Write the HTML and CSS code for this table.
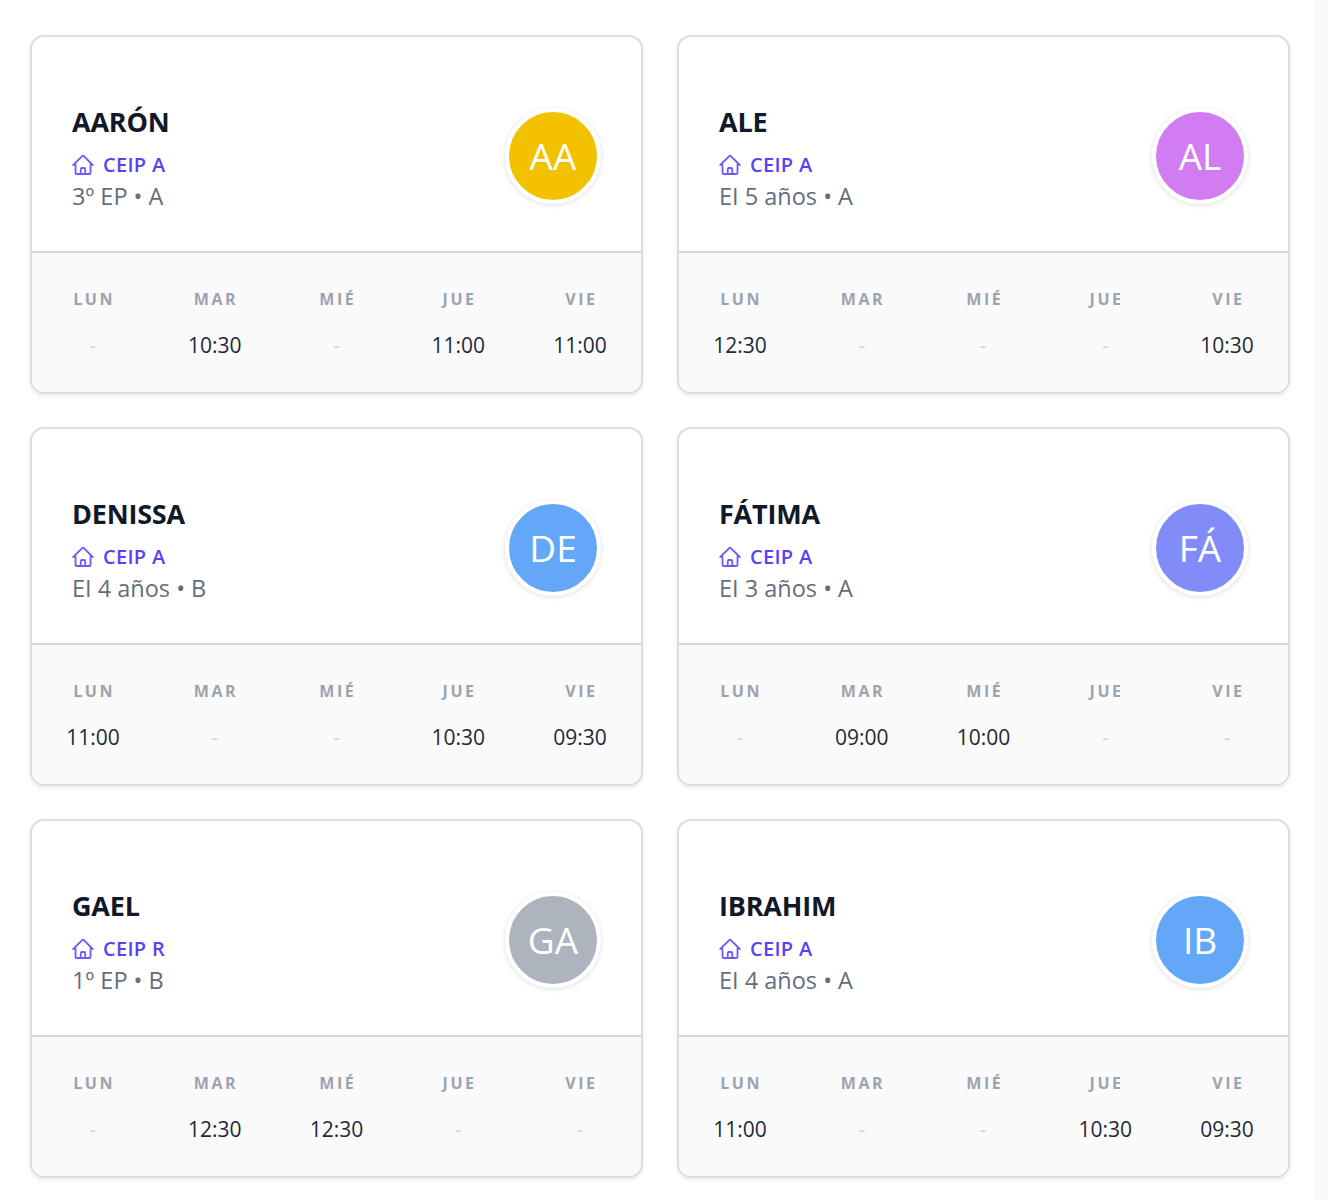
FILE: index.html
```html
<!DOCTYPE html>
<html lang="es">
<head>
<meta charset="utf-8">
<title>Alumnos</title>
<link rel="stylesheet" href="styles.css">
</head>
<body>
<main class="grid">

  <article class="card">
    <div class="card-top">
      <div class="info">
        <h2 class="name">AARÓN</h2>
        <div class="school"><svg class="home" viewBox="0 0 24 24" fill="none" stroke="currentColor" stroke-width="1.8" stroke-linecap="round" stroke-linejoin="round"><path d="m2.25 12 8.954-8.955c.44-.439 1.152-.439 1.591 0L21.75 12M4.5 9.75v10.125c0 .621.504 1.125 1.125 1.125H9.75v-4.875c0-.621.504-1.125 1.125-1.125h2.25c.621 0 1.125.504 1.125 1.125V21h4.125c.621 0 1.125-.504 1.125-1.125V9.75M8.25 21h8.25"/></svg><span>CEIP A</span></div>
        <div class="grade">3º EP • A</div>
      </div>
      <div class="avatar av-yellow">AA</div>
    </div>
    <div class="week">
      <div class="day"><span class="dname">LUN</span><span class="time empty">-</span></div>
      <div class="day"><span class="dname">MAR</span><span class="time">10:30</span></div>
      <div class="day"><span class="dname">MIÉ</span><span class="time empty">-</span></div>
      <div class="day"><span class="dname">JUE</span><span class="time">11:00</span></div>
      <div class="day"><span class="dname">VIE</span><span class="time">11:00</span></div>
    </div>
  </article>

  <article class="card">
    <div class="card-top">
      <div class="info">
        <h2 class="name">ALE</h2>
        <div class="school"><svg class="home" viewBox="0 0 24 24" fill="none" stroke="currentColor" stroke-width="1.8" stroke-linecap="round" stroke-linejoin="round"><path d="m2.25 12 8.954-8.955c.44-.439 1.152-.439 1.591 0L21.75 12M4.5 9.750v10.125c0 .621.504 1.125 1.125 1.125H9.75v-4.875c0-.621.504-1.125 1.125-1.125h2.250c.621 0 1.125.504 1.125 1.125V21h4.125c.621 0 1.125-.504 1.125-1.125V9.75M8.25 21h8.25"/></svg><span>CEIP A</span></div>
        <div class="grade">EI 5 años • A</div>
      </div>
      <div class="avatar av-purple">AL</div>
    </div>
    <div class="week">
      <div class="day"><span class="dname">LUN</span><span class="time">12:30</span></div>
      <div class="day"><span class="dname">MAR</span><span class="time empty">-</span></div>
      <div class="day"><span class="dname">MIÉ</span><span class="time empty">-</span></div>
      <div class="day"><span class="dname">JUE</span><span class="time empty">-</span></div>
      <div class="day"><span class="dname">VIE</span><span class="time">10:30</span></div>
    </div>
  </article>

  <article class="card">
    <div class="card-top">
      <div class="info">
        <h2 class="name">DENISSA</h2>
        <div class="school"><svg class="home" viewBox="0 0 24 24" fill="none" stroke="currentColor" stroke-width="1.8" stroke-linecap="round" stroke-linejoin="round"><path d="m2.25 12 8.954-8.955c.44-.439 1.152-.439 1.591 0L21.75 12M4.5 9.75v10.125c0 .621.504 1.125 1.125 1.125H9.75v-4.875c0-.621.504-1.125 1.125-1.125h2.25c.621 0 1.125.504 1.125 1.125V21h4.125c.621 0 1.125-.504 1.125-1.125V9.75M8.25 21h8.25"/></svg><span>CEIP A</span></div>
        <div class="grade">EI 4 años • B</div>
      </div>
      <div class="avatar av-blue">DE</div>
    </div>
    <div class="week">
      <div class="day"><span class="dname">LUN</span><span class="time">11:00</span></div>
      <div class="day"><span class="dname">MAR</span><span class="time empty">-</span></div>
      <div class="day"><span class="dname">MIÉ</span><span class="time empty">-</span></div>
      <div class="day"><span class="dname">JUE</span><span class="time">10:30</span></div>
      <div class="day"><span class="dname">VIE</span><span class="time">09:30</span></div>
    </div>
  </article>

  <article class="card">
    <div class="card-top">
      <div class="info">
        <h2 class="name">FÁTIMA</h2>
        <div class="school"><svg class="home" viewBox="0 0 24 24" fill="none" stroke="currentColor" stroke-width="1.8" stroke-linecap="round" stroke-linejoin="round"><path d="m2.25 12 8.954-8.955c.44-.439 1.152-.439 1.591 0L21.75 12M4.5 9.75v10.125c0 .621.504 1.125 1.125 1.125H9.75v-4.875c0-.621.504-1.125 1.125-1.125h2.25c.621 0 1.125.504 1.125 1.125V21h4.125c.621 0 1.125-.504 1.125-1.125V9.75M8.25 21h8.25"/></svg><span>CEIP A</span></div>
        <div class="grade">EI 3 años • A</div>
      </div>
      <div class="avatar av-indigo">FÁ</div>
    </div>
    <div class="week">
      <div class="day"><span class="dname">LUN</span><span class="time empty">-</span></div>
      <div class="day"><span class="dname">MAR</span><span class="time">09:00</span></div>
      <div class="day"><span class="dname">MIÉ</span><span class="time">10:00</span></div>
      <div class="day"><span class="dname">JUE</span><span class="time empty">-</span></div>
      <div class="day"><span class="dname">VIE</span><span class="time empty">-</span></div>
    </div>
  </article>

  <article class="card">
    <div class="card-top">
      <div class="info">
        <h2 class="name">GAEL</h2>
        <div class="school"><svg class="home" viewBox="0 0 24 24" fill="none" stroke="currentColor" stroke-width="1.8" stroke-linecap="round" stroke-linejoin="round"><path d="m2.25 12 8.954-8.955c.44-.439 1.152-.439 1.591 0L21.75 12M4.5 9.75v10.125c0 .621.504 1.125 1.125 1.125H9.75v-4.875c0-.621.504-1.125 1.125-1.125h2.25c.621 0 1.125.504 1.125 1.125V21h4.125c.621 0 1.125-.504 1.125-1.125V9.75M8.25 21h8.25"/></svg><span>CEIP R</span></div>
        <div class="grade">1º EP • B</div>
      </div>
      <div class="avatar av-gray">GA</div>
    </div>
    <div class="week">
      <div class="day"><span class="dname">LUN</span><span class="time empty">-</span></div>
      <div class="day"><span class="dname">MAR</span><span class="time">12:30</span></div>
      <div class="day"><span class="dname">MIÉ</span><span class="time">12:30</span></div>
      <div class="day"><span class="dname">JUE</span><span class="time empty">-</span></div>
      <div class="day"><span class="dname">VIE</span><span class="time empty">-</span></div>
    </div>
  </article>

  <article class="card">
    <div class="card-top">
      <div class="info">
        <h2 class="name">IBRAHIM</h2>
        <div class="school"><svg class="home" viewBox="0 0 24 24" fill="none" stroke="currentColor" stroke-width="1.8" stroke-linecap="round" stroke-linejoin="round"><path d="m2.25 12 8.954-8.955c.44-.439 1.152-.439 1.591 0L21.75 12M4.5 9.75v10.125c0 .621.504 1.125 1.125 1.125H9.75v-4.875c0-.621.504-1.125 1.125-1.125h2.25c.621 0 1.125.504 1.125 1.125V21h4.125c.621 0 1.125-.504 1.125-1.125V9.75M8.25 21h8.25"/></svg><span>CEIP A</span></div>
        <div class="grade">EI 4 años • A</div>
      </div>
      <div class="avatar av-blue">IB</div>
    </div>
    <div class="week">
      <div class="day"><span class="dname">LUN</span><span class="time">11:00</span></div>
      <div class="day"><span class="dname">MAR</span><span class="time empty">-</span></div>
      <div class="day"><span class="dname">MIÉ</span><span class="time empty">-</span></div>
      <div class="day"><span class="dname">JUE</span><span class="time">10:30</span></div>
      <div class="day"><span class="dname">VIE</span><span class="time">09:30</span></div>
    </div>
  </article>

</main>
</body>
</html>
```

FILE: styles.css
```css
* { box-sizing: border-box; }

html {
  background: linear-gradient(to right, #ffffff 1315px, #f9f9fa 1315px);
}

body {
  margin: 0;
  font-family: "Open Sans", "Noto Sans", "Liberation Sans", sans-serif;
  color: #111827;
}

.grid {
  display: grid;
  grid-template-columns: 613px 613px;
  column-gap: 34px;
  row-gap: 33px;
  padding: 35px 0 40px 30px;
}

.card {
  height: 359px;
  border: 2px solid #dcdee3;
  border-radius: 14px;
  background: #ffffff;
  box-shadow: 0 2px 4px rgba(17, 24, 39, 0.08);
  overflow: hidden;
  display: flex;
  flex-direction: column;
}

.card-top {
  height: 216px;
  display: flex;
  align-items: center;
  justify-content: space-between;
  padding: 66px 40px 38px 40px;
  border-bottom: 2px solid #d6d8de;
}

.info {
  display: flex;
  flex-direction: column;
}

.name {
  margin: 0;
  font-size: 27px;
  line-height: 34px;
  font-weight: 700;
  letter-spacing: -0.2px;
  color: #111827;
}

.school {
  display: flex;
  align-items: center;
  gap: 8px;
  margin-top: 12px;
  height: 28px;
  font-size: 20px;
  font-weight: 600;
  letter-spacing: 0.3px;
  color: #5b3ff2;
}

.home {
  width: 24px;
  height: 24px;
  margin-left: -1px;
  color: #6a5cf6;
  flex: none;
}

.grade {
  margin-top: 1px;
  font-size: 23.5px;
  line-height: 32px;
  color: #656d7a;
}

.avatar {
  width: 96px;
  height: 96px;
  margin-bottom: 5px;
  border-radius: 50%;
  border: 4px solid #ffffff;
  box-shadow: 0 1px 5px rgba(0, 0, 0, 0.14);
  display: flex;
  align-items: center;
  justify-content: center;
  color: #ffffff;
  font-size: 37px;
  font-weight: 400;
  flex: none;
}

.av-yellow { background: #f2c200; }
.av-purple { background: #d27cf2; }
.av-blue { background: #63a8f8; }
.av-indigo { background: #818cf8; }
.av-gray { background: #adb4bd; }

.week {
  flex: 1;
  background: #fafafa;
  display: grid;
  grid-template-columns: repeat(5, 1fr);
  padding-top: 36px;
}

.day {
  display: flex;
  flex-direction: column;
  align-items: center;
  gap: 22px;
}

.dname {
  font-size: 16px;
  line-height: 20px;
  font-weight: 700;
  letter-spacing: 2.5px;
  margin-right: -2.5px;
  color: #9ca3af;
}

.time {
  font-size: 21px;
  line-height: 28px;
  color: #1f2937;
}

.time.empty {
  color: #d1d5db;
  font-size: 21px;
}
```
